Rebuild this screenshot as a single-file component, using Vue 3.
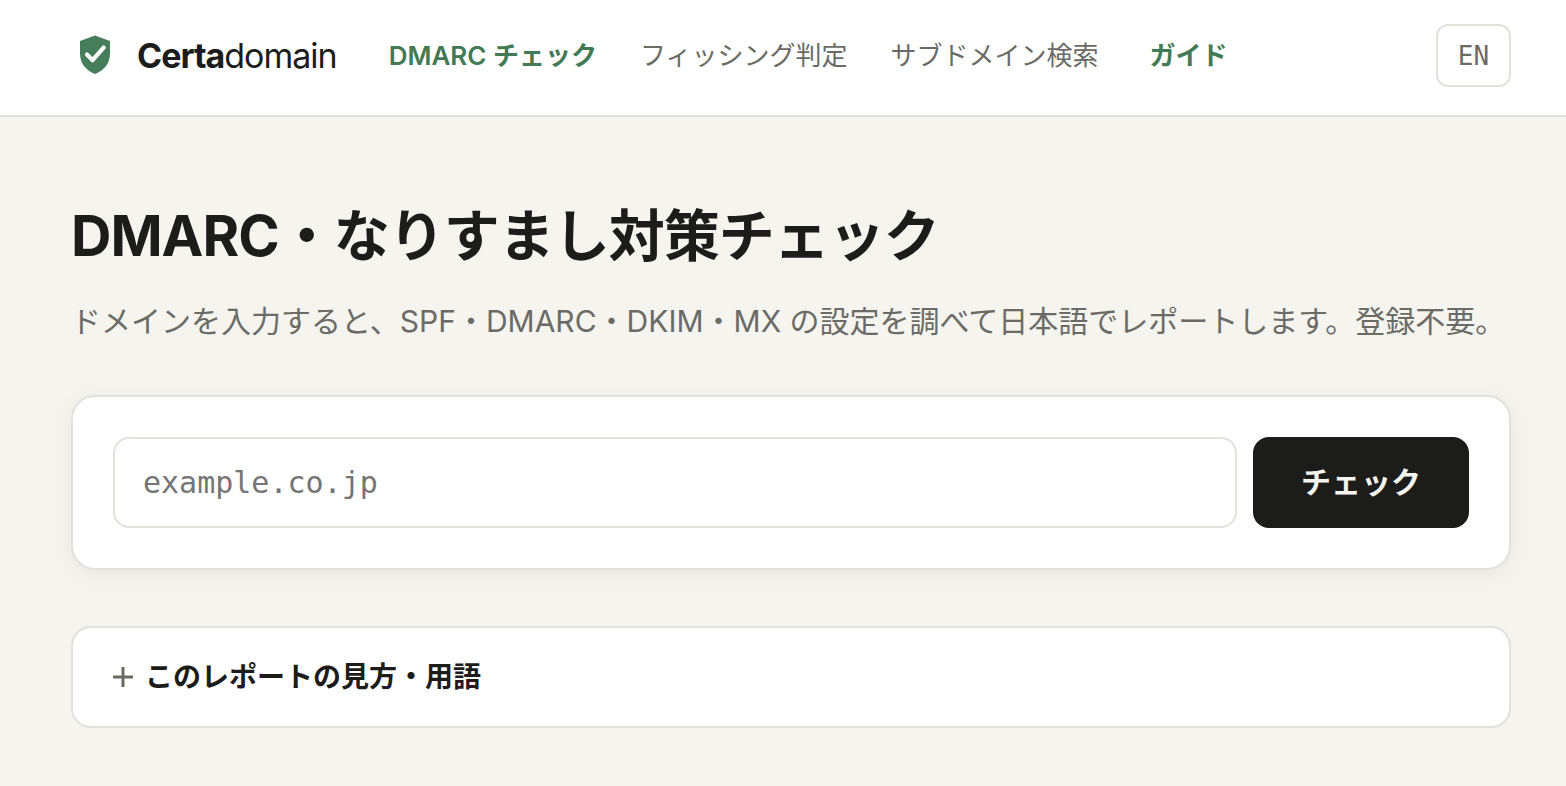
<script setup>
import { ref } from 'vue'

const domain = ref('')
const links = [
  { label: 'DMARC チェック', active: true },
  { label: 'フィッシング判定' },
  { label: 'サブドメイン検索' },
  { label: 'ガイド', active: true, guide: true },
]
</script>

<template>
  <div class="page">
    <header class="topbar">
      <a class="brand" href="#">
        <svg class="logo" viewBox="0 0 46 46" aria-hidden="true">
          <path d="M23 2.600 L38 8 V20.500 C38 30.500 32 37.500 23 41 C14 37.500 8 30.500 8 20.500 V8 Z" fill="#467d5a" />
          <path d="M15 21.500 L20.600 27.200 L31.600 14.600" fill="none" stroke="#fff" stroke-width="4.200" stroke-linecap="round" stroke-linejoin="round" />
        </svg>
        <span class="name"><b>Certa</b>domain</span>
      </a>
      <nav class="nav">
        <a v-for="l in links" :key="l.label" href="#" :class="{ active: l.active, guide: l.guide }">{{ l.label }}</a>
      </nav>
      <button class="lang" type="button">EN</button>
    </header>
    <main class="main">
      <h1>DMARC・なりすまし対策チェック</h1>
      <p class="lead">ドメインを入力すると、SPF・DMARC・DKIM・MX の設定を調べて日本語でレポートします。登録不要。</p>
      <form class="card" @submit.prevent>
        <input v-model="domain" type="text" placeholder="example.co.jp" aria-label="ドメイン" />
        <button class="submit" type="submit">チェック</button>
      </form>
      <details class="help">
        <summary>
          <svg class="plus" viewBox="0 0 20 20" aria-hidden="true">
            <path d="M10 0 V20 M0 10 H20" fill="none" stroke="#6b6b66" stroke-width="3" />
          </svg>
          <span>このレポートの見方・用語</span>
        </summary>
      </details>
    </main>
  </div>
</template>

<style>
body {
  background: #f5f4ef;
}
</style>

<style scoped>
.page {
  color: #1c1c1a;
  font-family: Inter, "Noto Sans CJK JP", sans-serif;
}
.topbar {
  display: flex;
  align-items: center;
  box-sizing: border-box;
  padding: 24px 55px 28px 72px;
  background: #fff;
  border-bottom: 2px solid #e2e1dc;
}
a {
  color: inherit;
  text-decoration: none;
  white-space: nowrap;
}
.brand {
  display: flex;
  align-items: center;
  gap: 19px;
}
.logo {
  width: 46px;
  height: 46px;
}
.name {
  font-size: 34px;
  line-height: 40px;
  letter-spacing: -1px;
}
.name b {
  font-weight: 700;
}
.nav {
  display: flex;
  gap: 43px;
  margin-left: 52px;
  font-size: 26px;
  line-height: 40px;
  color: #6b6b66;
}
.nav .active {
  color: #437a56;
  font-weight: 600;
}
.nav .guide {
  margin-left: 8px;
}
.lang {
  margin-left: auto;
  width: 75px;
  height: 63px;
  padding: 0;
  background: #fff;
  border: 2px solid #e2e1dc;
  border-radius: 12px;
  color: #6b6b66;
  font: 26px "DejaVu Sans Mono", monospace;
}
.main {
  padding: 79px 55px 58px 71px;
}
h1 {
  margin: 0;
  font-size: 56px;
  line-height: 80px;
  font-weight: 700;
  letter-spacing: -1px;
}
.lead {
  margin: 20px 0 0;
  font-size: 30px;
  line-height: 50px;
  color: #6b6b66;
}
.card {
  display: flex;
  gap: 16px;
  margin-top: 49px;
  padding: 40px;
  background: #fff;
  border: 2px solid #e2e1dc;
  border-radius: 24px;
  box-shadow: 0 4px 24px rgba(0, 0, 0, 0.06);
}
input {
  flex: 1;
  min-width: 0;
  box-sizing: border-box;
  height: 91px;
  padding: 0 28px;
  border: 2px solid #e2e1dc;
  border-radius: 16px;
  background: #fff;
  color: #1c1c1a;
  font: 30px "DejaVu Sans Mono", monospace;
}
input::placeholder {
  color: #757575;
}
.submit {
  width: 216px;
  height: 91px;
  padding: 0 0 6px;
  border: 0;
  border-radius: 16px;
  background: #1c1c1a;
  color: #f5f4ef;
  font: 600 30px Inter, "Noto Sans CJK JP", sans-serif;
}
.help {
  margin-top: 56px;
  padding: 28px 40px;
  background: #fff;
  border: 2px solid #e2e1dc;
  border-radius: 20px;
}
summary {
  display: flex;
  align-items: center;
  gap: 12px;
  font-size: 28px;
  line-height: 42px;
  font-weight: 600;
  list-style: none;
}
.plus {
  width: 20px;
  height: 20px;
}
</style>
